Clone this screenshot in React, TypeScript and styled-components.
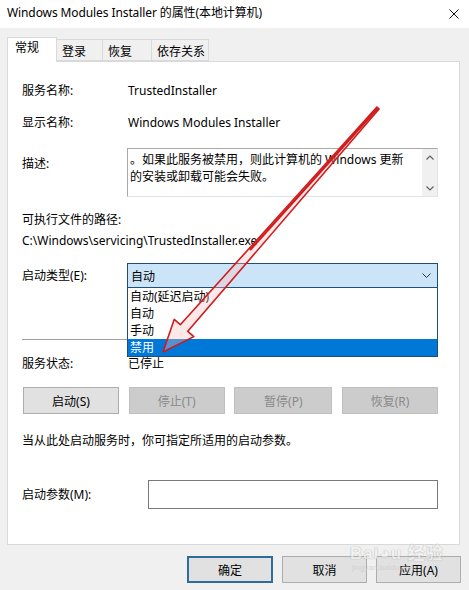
import React from "react";
import styled, { createGlobalStyle } from "styled-components";

const GlobalStyle = createGlobalStyle`
  html, body { margin: 0; padding: 0; background: #f0f0f0; }
  body { width: 469px; height: 590px; overflow: hidden; }
  * { box-sizing: border-box; }
`;

const FONT = `"Noto Sans", "Noto Sans CJK SC", sans-serif`;

const Window = styled.div`
  position: relative;
  width: 469px;
  height: 590px;
  background: #f0f0f0;
  font-family: ${FONT};
  font-size: 12px;
  color: #000;
  display: flex;
  flex-direction: column;
`;

const TitleBar = styled.div`
  height: 28px;
  background: #fff;
  display: flex;
  align-items: center;
  justify-content: space-between;
  padding: 0 10px 2px 7px;
`;

const Title = styled.div`
  font-size: 12px;
  line-height: 16px;
  letter-spacing: -0.1px;
`;

const CloseIcon = styled.svg`
  width: 10px;
  height: 10px;
  margin-top: 1px;
`;

const TabStrip = styled.div`
  display: flex;
  align-items: flex-end;
  padding: 9px 0 0 7px;
  position: relative;
  z-index: 1;
`;

const Tab = styled.div<{ $active?: boolean; $w: number }>`
  width: ${(p) => p.$w}px;
  height: ${(p) => (p.$active ? 25 : 22)}px;
  margin-bottom: ${(p) => (p.$active ? -1 : 0)}px;
  background: ${(p) => (p.$active ? "#fff" : "#f0f0f0")};
  border: 1px solid #d9d9d9;
  border-bottom: ${(p) => (p.$active ? "none" : "1px solid #d9d9d9")};
  border-left: ${(p) => (p.$active ? "1px solid #d9d9d9" : "none")};
  padding: ${(p) => (p.$active ? "2px 0 0 7px" : "4px 0 0 5px")};
  line-height: 16px;
  font-size: 12px;
`;

const Panel = styled.div`
  margin: 0 9px 0 7px;
  height: 484px;
  background: #fff;
  border: 1px solid #d9d9d9;
  padding: 21px 21px 0 14px;
  display: flex;
  flex-direction: column;
`;

const Row = styled.div<{ $mt: number; $align?: string }>`
  display: flex;
  align-items: ${(p) => p.$align || "center"};
  margin-top: ${(p) => p.$mt}px;
  position: relative;
`;

const Label = styled.div<{ $w?: number; $pt?: number }>`
  width: ${(p) => p.$w ?? 105}px;
  flex: none;
  line-height: 16px;
  padding-top: ${(p) => p.$pt ?? 0}px;
`;

const Value = styled.div`
  line-height: 16px;
  padding-left: 1px;
  white-space: nowrap;
`;

const Line = styled.div<{ $mt: number }>`
  margin-top: ${(p) => p.$mt}px;
  line-height: 16px;
  white-space: nowrap;
`;

const TextArea = styled.div`
  flex: 1;
  height: 49px;
  border-top: 1px solid #a8a8a8;
  border-left: 1px solid #a8a8a8;
  border-right: 1px solid #e3e3e3;
  border-bottom: 1px solid #e3e3e3;
  display: flex;
`;

const TextBody = styled.div`
  flex: 1;
  padding: 2px 0 0 2px;
  line-height: 17px;
`;

const ScrollBar = styled.div`
  width: 15px;
  background: #f0f0f0;
  display: flex;
  flex-direction: column;
  justify-content: space-between;
  align-items: center;
  padding: 6px 0 5px;
`;

const ScrollArrow = styled.svg`
  width: 8px;
  height: 5px;
`;

const ComboWrap = styled.div`
  flex: 1;
  position: relative;
`;

const Combo = styled.div`
  height: 25px;
  background: #cce4f7;
  border: 1px solid #1f4f78;
  display: flex;
  align-items: center;
  justify-content: space-between;
  padding: 0 6px 0 3px;
`;

const Chevron = styled.svg`
  width: 9px;
  height: 5px;
`;

const DropList = styled.div`
  position: absolute;
  left: 0;
  right: 0;
  top: 25px;
  background: #fff;
  border: 1px solid #1f4f78;
  border-top: none;
  z-index: 3;
`;

const DropItem = styled.div<{ $selected?: boolean }>`
  height: 17px;
  line-height: 17px;
  padding-left: 2px;
  background: ${(p) => (p.$selected ? "#0078d7" : "transparent")};
  color: ${(p) => (p.$selected ? "#fff" : "#000")};
`;

const Separator = styled.div`
  margin-top: 51px;
  height: 1px;
  background: #a0a0a0;
  margin-right: 1px;
`;

const ButtonRow = styled.div`
  margin-top: 15px;
  display: flex;
  justify-content: space-between;
  padding-left: 1px;
`;

const Button = styled.div<{ $disabled?: boolean; $w: number; $default?: boolean }>`
  width: ${(p) => p.$w}px;
  height: 27px;
  display: flex;
  align-items: center;
  justify-content: center;
  background: ${(p) => (p.$disabled ? "#cccccc" : "#e1e1e1")};
  border: ${(p) =>
    p.$default ? "2px solid #2e6c9c" : p.$disabled ? "1px solid #bfbfbf" : "1px solid #adadad"};
  color: ${(p) => (p.$disabled ? "#8a8a8a" : "#000")};
  font-size: 12px;
`;

const Input = styled.div`
  flex: 1;
  height: 29px;
  border: 1px solid #7a7a7a;
  background: #fff;
`;

const Footer = styled.div`
  display: flex;
  justify-content: flex-end;
  gap: 9px;
  padding: 11px 8px 0 0;
`;

const Overlay = styled.svg`
  position: absolute;
  left: 0;
  top: 0;
  width: 469px;
  height: 590px;
  pointer-events: none;
  z-index: 10;
`;

const Watermark = styled.div`
  position: absolute;
  left: 350px;
  top: 545px;
  z-index: 11;
  pointer-events: none;
  display: flex;
  flex-direction: column;
  align-items: flex-start;
  opacity: 0.6;
`;

const WmMain = styled.div`
  font-family: "Liberation Sans", "Noto Sans CJK SC", sans-serif;
  font-weight: bold;
  font-size: 17px;
  line-height: 18px;
  color: #f4f4f4;
  text-shadow: 0 0 1px #9a9a9a, 0 0 1px #9a9a9a;
  letter-spacing: 1px;
`;

const WmSub = styled.div`
  font-family: "Liberation Sans", sans-serif;
  font-size: 8px;
  line-height: 9px;
  color: #c8c8c8;
  margin-left: 2px;
`;

export default function App() {
  return (
    <>
      <GlobalStyle />
      <Window>
        <TitleBar>
          <Title>Windows Modules Installer 的属性(本地计算机)</Title>
          <CloseIcon viewBox="0 0 10 10">
            <path d="M0.5 0.5 L9.5 9.5 M9.5 0.5 L0.5 9.5" stroke="#111" strokeWidth="1" />
          </CloseIcon>
        </TitleBar>
        <TabStrip>
          <Tab $active $w={50}>常规</Tab>
          <Tab $w={46}>登录</Tab>
          <Tab $w={49}>恢复</Tab>
          <Tab $w={57}>依存关系</Tab>
        </TabStrip>
        <Panel>
          <Row $mt={0}>
            <Label>服务名称:</Label>
            <Value>TrustedInstaller</Value>
          </Row>
          <Row $mt={16}>
            <Label>显示名称:</Label>
            <Value>Windows Modules Installer</Value>
          </Row>
          <Row $mt={17} $align="flex-start">
            <Label $pt={8}>描述:</Label>
            <TextArea>
              <TextBody>
                。如果此服务被禁用，则此计算机的 Windows 更新
                <br />
                的安装或卸载可能会失败。
              </TextBody>
              <ScrollBar>
                <ScrollArrow viewBox="0 0 8 5">
                  <path d="M0.5 4.5 L4 1 L7.5 4.5" fill="none" stroke="#606060" strokeWidth="1.2" />
                </ScrollArrow>
                <ScrollArrow viewBox="0 0 8 5">
                  <path d="M0.5 0.5 L4 4 L7.5 0.5" fill="none" stroke="#606060" strokeWidth="1.2" />
                </ScrollArrow>
              </ScrollBar>
            </TextArea>
          </Row>
          <Line $mt={15}>可执行文件的路径:</Line>
          <Line $mt={5}>C:\Windows\servicing\TrustedInstaller.exe</Line>
          <Row $mt={14}>
            <Label>启动类型(E):</Label>
            <ComboWrap>
              <Combo>
                <span>自动</span>
                <Chevron viewBox="0 0 9 5">
                  <path d="M0.5 0.5 L4.5 4.5 L8.5 0.5" fill="none" stroke="#333" strokeWidth="1" />
                </Chevron>
              </Combo>
              <DropList>
                <DropItem>自动(延迟启动)</DropItem>
                <DropItem>自动</DropItem>
                <DropItem>手动</DropItem>
                <DropItem $selected>禁用</DropItem>
              </DropList>
            </ComboWrap>
          </Row>
          <Separator />
          <Row $mt={16}>
            <Label>服务状态:</Label>
            <Value>已停止</Value>
          </Row>
          <ButtonRow>
            <Button $w={96}>启动(S)</Button>
            <Button $w={96} $disabled>停止(T)</Button>
            <Button $w={98} $disabled>暂停(P)</Button>
            <Button $w={96} $disabled>恢复(R)</Button>
          </ButtonRow>
          <Line $mt={19}>当从此处启动服务时，你可指定所适用的启动参数。</Line>
          <Row $mt={31}>
            <Label $w={126}>启动参数(M):</Label>
            <Input />
          </Row>
        </Panel>
        <Footer>
          <Button $w={86} $default>确定</Button>
          <Button $w={85}>取消</Button>
          <Button $w={85}>应用(A)</Button>
        </Footer>
        <Overlay viewBox="0 0 469 590">
          <polygon
            points="163,352 174.2,319.4 180.3,324.7 376.9,107 379.1,109 187.8,331.3 193.8,336.6"
            fill="rgba(255,190,190,0.35)"
            stroke="#cf1b1b"
            strokeWidth="1.6"
            strokeLinejoin="round"
          />
          <line x1="378" y1="108" x2="250" y2="250" stroke="#cf1b1b" strokeWidth="2.2" />
        </Overlay>
        <Watermark>
          <WmMain>Bai◕u 经验</WmMain>
          <WmSub>jingyan.baidu.com</WmSub>
        </Watermark>
      </Window>
    </>
  );
}
